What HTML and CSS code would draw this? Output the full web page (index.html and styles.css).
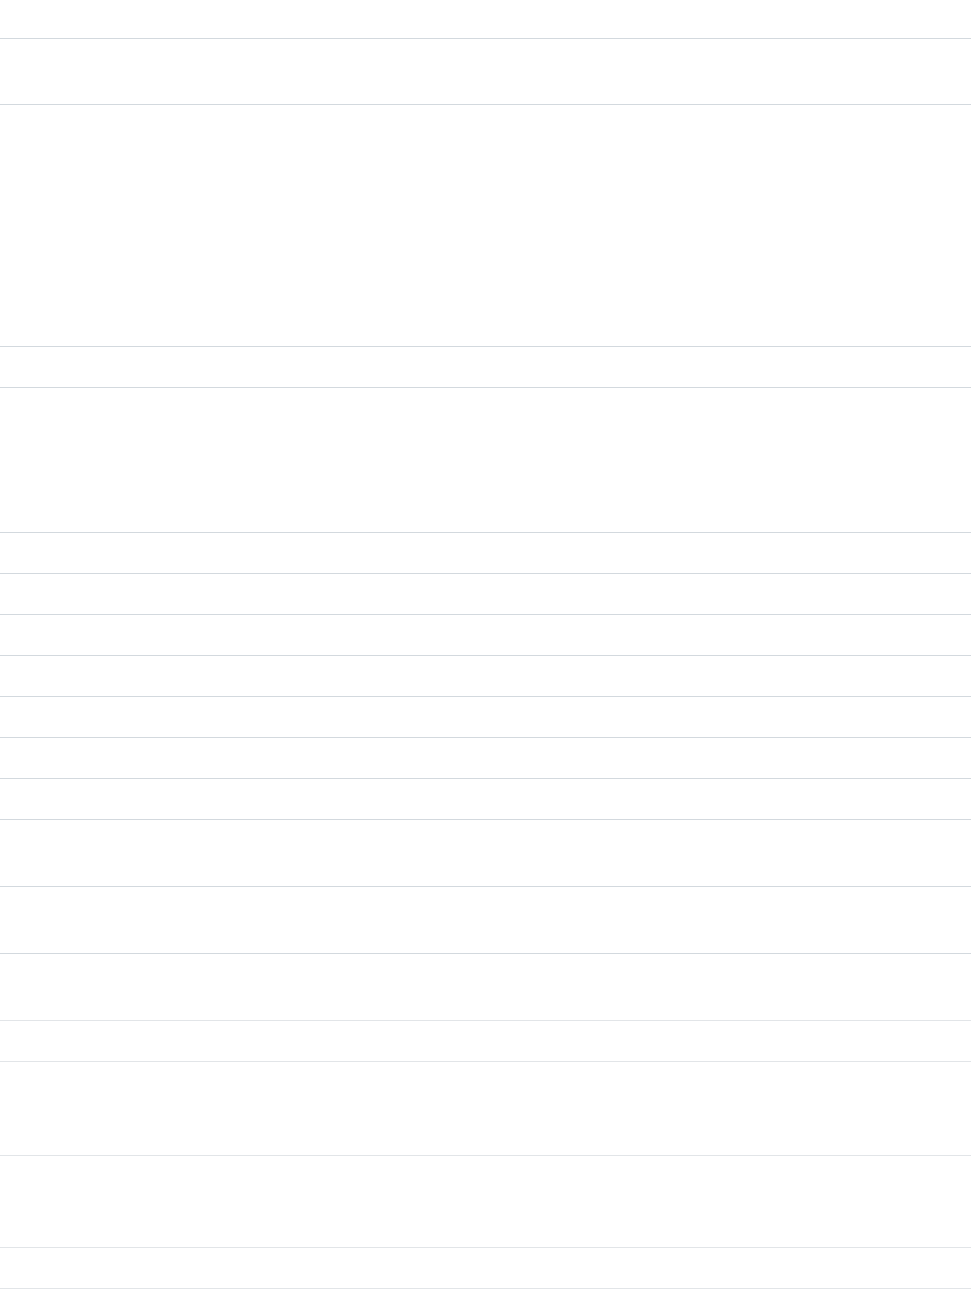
FILE: index.html
```html
<!DOCTYPE html>
<html lang="en">
<head>
  <meta charset="UTF-8" />
  <meta name="viewport" content="width=device-width, initial-scale=1.0" />
  <title>Lista</title>
  <link rel="stylesheet" href="styles.css">
</head>
<body>

  <!-- Cabeçalho -->
  <div class="lista">
    <div class="linha topo"></div>
    <div class="linha media"></div>
    <div class="linha grande"></div>
    <div class="linha curta"></div>
    <div class="linha alta"></div>

    <!-- Linhas curtas -->
    <div class="linha curta"></div>
    <div class="linha curta"></div>
    <div class="linha curta"></div>
    <div class="linha curta"></div>
    <div class="linha curta"></div>
    <div class="linha curta"></div>
    <div class="linha curta"></div>

    <!-- Linhas médias -->
    <div class="linha media2"></div>
    <div class="linha media2"></div>
    <div class="linha media2 clara"></div>

    <!-- Rodapé -->
    <div class="linha curta clara"></div>
    <div class="linha dupla clara"></div>
    <div class="linha dupla2 clara"></div>
    <div class="linha curta clara"></div>
  </div>

</body>
</html>
```

FILE: styles.css
```css
body {
  margin: 0;
  padding: 0;
  background: #ffffff;
  font-family: 'Liberation Sans', sans-serif;
}

.lista {
  display: flex;
  flex-direction: column;
  margin-right: 2px;
}

.linha {
  flex-shrink: 0;
  height: 40px;
  border-bottom: 1px solid #d3d9de;
}

.linha.clara {
  border-bottom-color: #e2e5e8;
}

.topo { height: 38px; }
.media { height: 65px; }
.grande { height: 241px; }
.curta { height: 40px; }
.alta { height: 144px; }
.media2 { height: 66px; }
.dupla { height: 93px; }
.dupla2 { height: 91px; }
```
